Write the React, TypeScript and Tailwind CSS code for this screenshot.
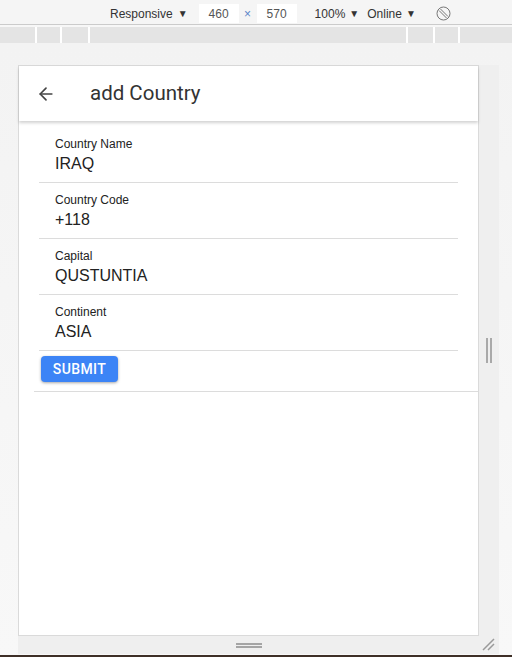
import { ArrowLeft } from "lucide-react";

const fields = [
  { label: "Country Name", value: "IRAQ" },
  { label: "Country Code", value: "+118" },
  { label: "Capital", value: "QUSTUNTIA" },
  { label: "Continent", value: "ASIA" },
];

function Toolbar() {
  return (
    <div className="h-[25px] pt-[3px] bg-[#f5f5f5] border-b border-[#cbcbcb] flex items-center text-[12px] text-[#333] font-['Liberation_Sans',Arial,sans-serif]">
      <div className="ml-[110px] flex items-center">
        Responsive <span className="ml-[5px] text-[10px]">▼</span>
      </div>
      <div className="ml-[11px] w-[40px] h-[19px] bg-white flex items-center justify-center text-[#555]">460</div>
      <div className="w-[18px] text-center text-[#5b85c9]">×</div>
      <div className="w-[40px] h-[19px] bg-white flex items-center justify-center text-[#555]">570</div>
      <div className="ml-[18px] flex items-center">
        100% <span className="ml-[4px] text-[10px]">▼</span>
      </div>
      <div className="ml-[8px] flex items-center">
        Online <span className="ml-[4px] text-[10px]">▼</span>
      </div>
      <svg className="ml-[20px]" width="15" height="15" viewBox="0 0 15 15" fill="none" stroke="#777" strokeWidth="1">
        <circle cx="7.5" cy="7.5" r="6.5" />
        <path d="M3 4.5 L10.5 12 M4.5 3 L12 10.5" />
      </svg>
    </div>
  );
}

function Ruler() {
  const segs = [35, 23, 26, 316, 25, 23, 52];
  return (
    <div className="mt-[2px] h-[16px] flex gap-[2px] bg-white">
      {segs.map((w, i) => (
        <div key={i} className="h-full bg-[#e4e4e4]" style={{ width: w }} />
      ))}
    </div>
  );
}

function Field({ label, value }: { label: string; value: string }) {
  return (
    <div className="h-[56px] border-b border-[#dcdcdc] pl-[16px] pt-[9px] font-['Liberation_Sans',Arial,sans-serif]">
      <div className="text-[12px] leading-[16px] text-[#222]">{label}</div>
      <div className="text-[16px] leading-[24px] text-[#222]">{value}</div>
    </div>
  );
}

function AddCountry() {
  return (
    <div className="w-[461px] h-[571px] bg-white border border-[#dadada] font-['Roboto',sans-serif]">
      <div className="h-[55px] flex items-center shadow-[0_2px_3px_rgba(0,0,0,0.18)] relative">
        <ArrowLeft className="ml-[17px] text-[#444]" size={20} strokeWidth={2} />
        <div className="ml-[34px] text-[20.5px] text-[#333]">add Country</div>
      </div>
      <div className="ml-[15px] pt-[6px] pb-[9px] border-b border-[#dcdcdc]">
        <div className="ml-[5px] mr-[20px]">
          {fields.map((f) => (
            <Field key={f.label} label={f.label} value={f.value} />
          ))}
        </div>
        <button
          type="button"
          className="mt-[5px] ml-[7px] w-[77px] h-[26px] rounded-[4px] bg-[#3c84f6] text-white text-[14px] font-medium tracking-[0.4px] shadow-[0_1px_3px_rgba(0,0,0,0.35)]"
        >
          SUBMIT
        </button>
      </div>
    </div>
  );
}

export default function App() {
  return (
    <div className="w-[512px] h-[657px] bg-[#f7f7f7] flex flex-col overflow-hidden">
      <Toolbar />
      <Ruler />
      <div className="flex-1 flex flex-col pl-[18px] pt-[22px] bg-gradient-to-b from-[#f3f3f3] to-[#f8f8f8]">
        <div className="flex">
          <AddCountry />
          <div className="w-[20px] bg-[#efefef] flex items-center justify-center gap-[2px]">
            <div className="w-[2px] h-[25px] bg-[#a9a9a9]" />
            <div className="w-[2px] h-[25px] bg-[#a9a9a9]" />
          </div>
        </div>
        <div className="w-[481px] h-[18px] bg-[#efefef] relative flex flex-col items-center justify-center gap-[1px]">
          <div className="mr-[20px] w-[26px] h-[2px] bg-[#a5a5a5]" />
          <div className="mr-[20px] w-[26px] h-[2px] bg-[#a5a5a5]" />
          <svg className="absolute right-[4px] bottom-[3px]" width="13" height="13" viewBox="0 0 13 13" stroke="#9a9a9a" strokeWidth="1.5">
            <path d="M1 12 L12 1 M6 12 L12 6" />
          </svg>
        </div>
        <div className="flex-1" />
      </div>
      <div className="h-[2px] bg-[#3e2f27]" />
    </div>
  );
}
